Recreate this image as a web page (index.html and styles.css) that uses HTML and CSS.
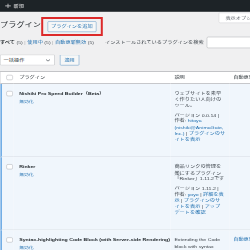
FILE: index.html
```html
<!DOCTYPE html>
<html lang="ja">
<head>
  <meta charset="UTF-8">
  <title>プラグイン</title>
  <link rel="stylesheet" href="styles.css">
</head>
<body>
  <div class="screen">
    <!-- 管理バー -->
    <div class="adminbar">
      <span class="ab-new">
        <svg class="ab-plus" viewBox="0 0 20 20" width="20" height="20"><path d="M10 3v14M3 10h14"/></svg>
        新規
      </span>
    </div>

    <!-- 表示オプション -->
    <div class="screen-meta">
      <button class="screen-opt">表示オプション ▼</button>
    </div>

    <div class="wrap">
      <div class="title-row">
        <h1>プラグイン</h1>
        <span class="mark"><a class="add-new">プラグインを追加</a></span>
      </div>

      <div class="filter-row">
        <ul class="subsubsub">
          <li><a class="current">すべて <span class="count">(5)</span></a> |</li>
          <li><a>使用中 <span class="count">(5)</span></a> |</li>
          <li><a>自動更新無効 <span class="count">(5)</span></a></li>
        </ul>
        <div class="search-box">
          <label for="plugin-search">インストールされているプラグインを検索</label>
          <input type="search" id="plugin-search">
        </div>
      </div>

      <div class="tablenav">
        <div class="bulk-select">
          一括操作
          <svg viewBox="0 0 16 16" width="16" height="16"><path d="M3 6l5 5 5-5"/></svg>
        </div>
        <button class="apply">適用</button>
      </div>

      <table class="plugins">
        <colgroup>
          <col class="c-check">
          <col class="c-title">
          <col class="c-desc">
          <col>
        </colgroup>
        <thead>
          <tr>
            <th class="check-column"><span class="cb"></span></th>
            <th class="col-title">プラグイン</th>
            <th>説明</th>
            <th>自動更新</th>
          </tr>
        </thead>
        <tbody>
          <tr class="active">
            <th class="check-column"><span class="cb"></span></th>
            <td class="col-title">
              <strong>Nishiki Pro Speed Builder（Beta）</strong>
              <div class="row-actions"><a>無効化</a></div>
            </td>
            <td class="col-desc">
              <p>ウェブサイトを素早く作りたい人向けのツール。</p>
              <div class="ver">バージョン 0.0.14 | 作者: <a>hitoya (nishiki@AnimaGate, Inc.)</a> | <a>プラグインのサイトを表示</a></div>
            </td>
            <td></td>
          </tr>
          <tr class="active">
            <th class="check-column"><span class="cb"></span></th>
            <td class="col-title">
              <strong>Rinker</strong>
              <div class="row-actions"><a>無効化</a></div>
            </td>
            <td class="col-desc">
              <p>商品リンクの管理を楽にするプラグイン「Rinker」1.11.2です</p>
              <div class="ver">バージョン 1.11.2 | 作者: <a>yoyo</a> | <a>詳細を表示</a> | <a>プラグインのサイトを表示</a> | <a>アップデートを確認</a></div>
            </td>
            <td></td>
          </tr>
          <tr class="active">
            <th class="check-column"><span class="cb"></span></th>
            <td class="col-title">
              <strong>Syntax-highlighting Code Block (with Server-side Rendering)</strong>
              <div class="row-actions"><a>無効化</a></div>
            </td>
            <td class="col-desc">
              <p>Extending the Code block with syntax highlighting rendered on the server.</p>
            </td>
            <td><a>自動更新を有効化</a></td>
          </tr>
        </tbody>
      </table>
    </div>
  </div>
</body>
</html>
```

FILE: styles.css
```css
* { box-sizing: border-box; }

html, body {
  margin: 0;
  height: 100%;
  overflow: hidden;
  background: #f0f0f1;
}

body {
  font-family: "Liberation Sans", "Noto Sans CJK JP", sans-serif;
  font-size: 13px;
  color: #3c434a;
}

a { color: #2271b1; text-decoration: none; }

/* 元画面は横0.4・縦0.31に縮小されている */
.screen {
  width: 700px;
  transform: scale(.4, .31);
  transform-origin: 0 0;
}

.adminbar {
  height: 38px;
  background: #1d2327;
  color: #f0f0f1;
  display: flex;
  align-items: center;
  padding-left: 10px;
}
.ab-new { display: flex; align-items: center; gap: 4px; }
.ab-plus path { stroke: #c3c4c7; stroke-width: 2.5; fill: none; }

.screen-meta { float: right; margin-right: 20px; }
.screen-opt {
  margin-top: 3px;
  height: 33px;
  padding: 0 8px 0 16px;
  border: 1px solid #c3c4c7;
  border-radius: 0 0 4px 4px;
  background: #fff;
  color: #646970;
  font: inherit;
}

.title-row {
  display: flex;
  align-items: center;
  margin-top: 17px;
  height: 61px;
}
h1 {
  margin: 0;
  font-size: 20.5px;
  font-weight: 400;
  color: #1d2327;
  line-height: 27px;
  align-self: flex-start;
  margin-top: 12px;
}
.mark {
  display: flex;
  align-items: center;
  height: 61px;
  padding: 0 11px;
  border: solid #dc2a2a;
  border-width: 6px 5px;
}
.add-new {
  display: block;
  height: 34px;
  line-height: 32px;
  padding: 0 8px;
  border: 1px solid #2271b1;
  border-radius: 3px;
  background: #f6f7f7;
}

.filter-row {
  display: flex;
  align-items: center;
  height: 36px;
  margin-top: 3px;
}
.subsubsub {
  list-style: none;
  margin: 0;
  padding: 0;
  display: flex;
  gap: 4px;
  color: #a7aaad;
}
.subsubsub .current { color: #1d2327; font-weight: 600; }
.subsubsub .count { color: #50575e; font-weight: 400; }
.search-box { margin-left: auto; display: flex; align-items: center; gap: 8px; }
.search-box input {
  width: 183px;
  height: 36px;
  border: 1px solid #8c8f94;
  border-radius: 4px;
  background: #fff;
}

.tablenav {
  display: flex;
  gap: 13px;
  margin-top: 21px;
}
.bulk-select {
  width: 137px;
  height: 35px;
  display: flex;
  align-items: center;
  justify-content: space-between;
  padding: 0 8px;
  border: 1px solid #8c8f94;
  border-radius: 3px;
  background: #fff;
  color: #2c3338;
}
.bulk-select path { stroke: #50575e; stroke-width: 2; fill: none; }
.apply {
  height: 35px;
  padding: 0 10px;
  border: 1px solid #2271b1;
  border-radius: 3px;
  background: #f6f7f7;
  color: #2271b1;
  font: inherit;
}

.plugins {
  width: 700px;
  margin-top: 18px;
  table-layout: fixed;
  border-collapse: separate;
  border-spacing: 0;
  background: #fff;
  border: 1px solid #c3c4c7;
  border-top-width: 3px;
}
.c-check { width: 32px; }
.c-title { width: 393px; }
.c-desc { width: 147px; }

.plugins thead th {
  height: 39px;
  padding: 0 10px;
  text-align: left;
  font-weight: 400;
  color: #2c3338;
  border-bottom: 3px solid #c3c4c7;
}
.plugins thead .check-column { padding-left: 15px; }

.cb {
  display: block;
  width: 16px;
  height: 16px;
  border: 1px solid #8c8f94;
  border-radius: 4px;
  background: #fff;
}

.plugins tbody tr { height: 236px; }
.plugins tbody td,
.plugins tbody th {
  vertical-align: top;
  padding: 22px 10px 0;
  line-height: 19.5px;
  border-bottom: 3px solid #dfe4ea;
  text-align: left;
}
.plugins tr.active td,
.plugins tr.active th { background: #f0f6fc; }
.plugins tr.active .check-column {
  border-left: 4px solid #72aee6;
  padding: 23px 0 0 11px;
}

.plugins .col-title { padding-left: 15px; }
.col-title strong {
  display: block;
  font-weight: 600;
  color: #1d2327;
  white-space: nowrap;
  margin-bottom: 5px;
}
.row-actions { font-size: 12px; }

.col-desc p { margin: 0 0 10px; }
```
